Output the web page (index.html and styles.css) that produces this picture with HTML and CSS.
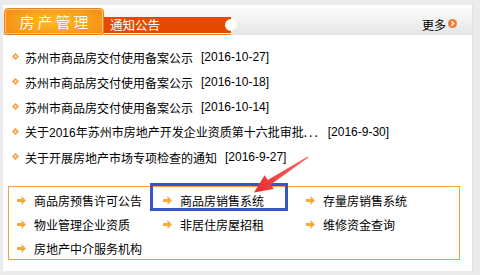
FILE: index.html
```html
<!DOCTYPE html>
<html lang="zh-CN">
<head>
<meta charset="utf-8">
<title>房产管理</title>
<link rel="stylesheet" href="styles.css">
</head>
<body>
<div class="panel">
  <div class="head">
    <div class="tab">房产管理</div>
    <div class="bar">通知公告</div>
    <a class="more" href="#">更多<svg class="more-ico" width="9" height="9" viewBox="0 0 9 9"><circle cx="4.5" cy="4.5" r="4.5" fill="#f47a2e"/><path d="M3.4 2.3 L5.6 4.5 L3.4 6.7" fill="none" stroke="#fff" stroke-width="1.5"/></svg></a>
  </div>
  <ul class="news">
    <li><svg class="dot" viewBox="0 0 7 7"><polygon points="3.5,0 7,3.5 3.5,7 0,3.5" fill="#f39b3e"/><polygon points="3.5,2 5,3.5 3.5,5 2,3.5" fill="#fde3c0"/></svg><span class="t">苏州市商品房交付使用备案公示</span><span class="d">[2016-10-27]</span></li>
    <li><svg class="dot" viewBox="0 0 7 7"><polygon points="3.5,0 7,3.5 3.5,7 0,3.5" fill="#f39b3e"/><polygon points="3.5,2 5,3.5 3.5,5 2,3.5" fill="#fde3c0"/></svg><span class="t">苏州市商品房交付使用备案公示</span><span class="d">[2016-10-18]</span></li>
    <li><svg class="dot" viewBox="0 0 7 7"><polygon points="3.5,0 7,3.5 3.5,7 0,3.5" fill="#f39b3e"/><polygon points="3.5,2 5,3.5 3.5,5 2,3.5" fill="#fde3c0"/></svg><span class="t">苏州市商品房交付使用备案公示</span><span class="d">[2016-10-14]</span></li>
    <li><svg class="dot" viewBox="0 0 7 7"><polygon points="3.5,0 7,3.5 3.5,7 0,3.5" fill="#f39b3e"/><polygon points="3.5,2 5,3.5 3.5,5 2,3.5" fill="#fde3c0"/></svg><span class="t">关于<span class="num">2016</span>年苏州市房地产开发企业资质第十六批审批<span class="ell">...</span></span><span class="d">[2016-9-30]</span></li>
    <li><svg class="dot" viewBox="0 0 7 7"><polygon points="3.5,0 7,3.5 3.5,7 0,3.5" fill="#f39b3e"/><polygon points="3.5,2 5,3.5 3.5,5 2,3.5" fill="#fde3c0"/></svg><span class="t">关于开展房地产市场专项检查的通知</span><span class="d">[2016-9-27]</span></li>
  </ul>
  <div class="links">
    <div class="link"><svg class="arr" viewBox="0 0 9 9"><polygon points="0,3 4.5,3 4.5,0 9,4.5 4.5,9 4.5,6 0,6" fill="#f9a93a"/></svg>商品房预售许可公告</div>
    <div class="link"><svg class="arr" viewBox="0 0 9 9"><polygon points="0,3 4.5,3 4.5,0 9,4.5 4.5,9 4.5,6 0,6" fill="#f9a93a"/></svg>商品房销售系统</div>
    <div class="link"><svg class="arr" viewBox="0 0 9 9"><polygon points="0,3 4.5,3 4.5,0 9,4.5 4.5,9 4.5,6 0,6" fill="#f9a93a"/></svg>存量房销售系统</div>
    <div class="link"><svg class="arr" viewBox="0 0 9 9"><polygon points="0,3 4.5,3 4.5,0 9,4.5 4.5,9 4.5,6 0,6" fill="#f9a93a"/></svg>物业管理企业资质</div>
    <div class="link"><svg class="arr" viewBox="0 0 9 9"><polygon points="0,3 4.5,3 4.5,0 9,4.5 4.5,9 4.5,6 0,6" fill="#f9a93a"/></svg>非居住房屋招租</div>
    <div class="link"><svg class="arr" viewBox="0 0 9 9"><polygon points="0,3 4.5,3 4.5,0 9,4.5 4.5,9 4.5,6 0,6" fill="#f9a93a"/></svg>维修资金查询</div>
    <div class="link"><svg class="arr" viewBox="0 0 9 9"><polygon points="0,3 4.5,3 4.5,0 9,4.5 4.5,9 4.5,6 0,6" fill="#f9a93a"/></svg>房地产中介服务机构</div>
  </div>
</div>
<svg class="overlay" width="480" height="275" viewBox="0 0 480 275">
  <defs>
    <linearGradient id="ag" x1="308" y1="157" x2="254" y2="192" gradientUnits="userSpaceOnUse">
      <stop offset="0" stop-color="#f56a6a"/>
      <stop offset="1" stop-color="#ee2b2b"/>
    </linearGradient>
  </defs>
  <rect x="151.5" y="184.5" width="135" height="25" fill="none" stroke="#3456c9" stroke-width="3"/>
  <polygon points="307.6,156.4 267.8,180.1 264.6,175.2 254,192.5 273.9,189.1 270.8,184.4 308.4,157.6" fill="url(#ag)"/>
</svg>
</body>
</html>
```
FILE: styles.css
```css
html, body {
  margin: 0;
  padding: 0;
}
body {
  width: 480px;
  height: 275px;
  overflow: hidden;
  position: relative;
  background: #ebebeb;
  font-family: "Noto Sans CJK SC", "Liberation Sans", sans-serif;
  font-size: 12px;
  color: #000;
}
.panel {
  margin: 5px 0 0 3px;
  width: 470px;
  height: 266px;
  background: #fff;
  box-sizing: border-box;
  border-right: 1px solid #e0e0e0;
}
.head {
  height: 30px;
  display: flex;
  align-items: flex-end;
  background: linear-gradient(#ffffff, #e4e4e4);
}
.tab {
  margin-left: 1px;
  width: 100px;
  height: 27px;
  box-sizing: border-box;
  border: 1px solid #ec8216;
  border-radius: 4px 4px 2px 2px;
  box-shadow: inset 0 0 0 1px #ffc675;
  background: radial-gradient(ellipse 60% 70% at 50% 50%, #ffbe1c 0%, #f9a41c 55%, #f38d18 100%);
  color: #fff;
  font-size: 15px;
  letter-spacing: 3px;
  line-height: 25px;
  text-align: center;
  padding-left: 3px;
  text-shadow: 0 0 1px #f08a10;
}
.bar {
  position: relative;
  width: 127px;
  height: 17px;
  box-sizing: border-box;
  margin-bottom: 1px;
  background: #e64a00;
  border-bottom: 1px solid #fff;
  box-shadow: 0 1px 0 #f07a20;
  color: #fff;
  font-size: 12.5px;
  line-height: 16px;
  padding-left: 6px;
}
.bar::after {
  content: "";
  position: absolute;
  right: -6px;
  top: 2px;
  width: 12px;
  height: 12px;
  border-radius: 50%;
  background: radial-gradient(circle at 45% 40%, #ffffff 50%, #e6e6e6 100%);
}
.more {
  margin-left: auto;
  margin-right: 15px;
  margin-bottom: 3px;
  display: flex;
  align-items: center;
  gap: 2px;
  color: #000;
  text-decoration: none;
  font-size: 12px;
  line-height: 14px;
}
.more-ico {
  margin-top: -3px;
}
.news {
  list-style: none;
  margin: 0;
  padding: 10px 0 0;
}
.news li {
  height: 25px;
  display: flex;
  align-items: center;
  line-height: 25px;
  white-space: nowrap;
}
.dot {
  width: 7px;
  height: 7px;
  margin-left: 9px;
  margin-right: 6px;
  margin-top: -3px;
  flex: none;
}
.num {
  font-family: "Liberation Sans", sans-serif;
  font-size: 12px;
}
.ell {
  letter-spacing: 2px;
}
.d {
  margin-left: 8px;
  font-family: "Liberation Sans", sans-serif;
  font-size: 12px;
}
.links {
  margin: 16px 0 0 5px;
  width: 452px;
  height: 74px;
  box-sizing: border-box;
  border: 1px solid #f6a03a;
  padding-top: 1px;
  display: grid;
  grid-template-columns: 146px 143px 1fr;
  grid-auto-rows: 24px;
}
.link {
  display: flex;
  align-items: center;
  white-space: nowrap;
}
.arr {
  width: 9px;
  height: 9px;
  margin-left: 8px;
  margin-right: 8px;
  flex: none;
}
.overlay {
  position: absolute;
  left: 0;
  top: 0;
  pointer-events: none;
}
```
